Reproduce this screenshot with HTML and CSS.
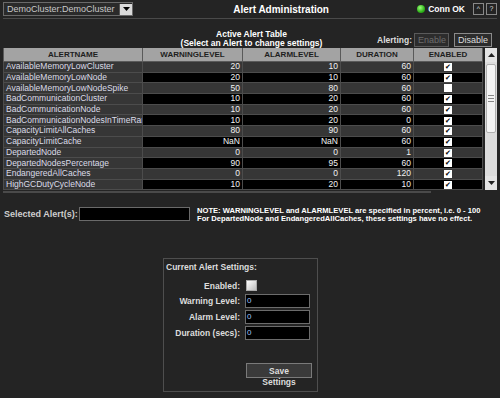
FILE: index.html
```html
<!DOCTYPE html>
<html>
<head>
    <title>Alert Administration</title>
    <link rel="stylesheet" href="styles.css">
</head>
<body>
    <div class="top-bar">
        <div class="cluster-select">
            <span class="cluster-name">DemoCluster:DemoCluster</span>
            <span class="select-arrow"><svg width="7" height="4" viewBox="0 0 7 4"><path d="M0 0h7L3.5 4z" fill="#000"/></svg></span>
        </div>
        <div class="page-title">Alert Administration</div>
        <div class="conn-status">
            <span class="conn-dot"></span>
            <span class="conn-text">Conn OK</span>
            <span class="mini-button">^</span>
            <span class="mini-button">?</span>
        </div>
    </div>

    <div class="table-heading">
        <div></div>
        <div class="table-title">Active Alert Table<br>(Select an Alert to change settings)</div>
        <div class="alerting">
            <span class="alerting-label">Alerting:</span>
            <button class="alert-button disabled">Enable</button>
            <button class="alert-button">Disable</button>
        </div>
    </div>

    <div class="table-wrap">
        <table class="alert-table">
            <colgroup>
                <col style="width:139px">
                <col style="width:100px">
                <col style="width:98px">
                <col style="width:73px">
                <col style="width:69px">
            </colgroup>
            <thead>
                <tr><th>ALERTNAME</th><th>WARNINGLEVEL</th><th>ALARMLEVEL</th><th>DURATION</th><th>ENABLED</th></tr>
            </thead>
            <tbody id="alert-rows"></tbody>
        </table>
        <div class="v-scroll">
            <div class="scroll-btn"><svg width="7" height="4" viewBox="0 0 7 4"><path d="M3.5 0L7 4H0z" fill="#222"/></svg></div>
            <div class="scroll-track">
                <div class="scroll-thumb"><span class="grip"></span></div>
            </div>
            <div class="scroll-btn"><svg width="7" height="4" viewBox="0 0 7 4"><path d="M0 0h7L3.5 4z" fill="#222"/></svg></div>
        </div>
    </div>
    <div class="h-scroll"></div>

    <div class="selected-row">
        <span class="selected-label">Selected Alert(s):</span>
        <span class="selected-input"></span>
        <div class="note">NOTE: WARNINGLEVEL and ALARMLEVEL are specified in percent, i.e. 0 - 100<br>For DepartedNode and EndangeredAllCaches, these settings have no effect.</div>
    </div>

    <div class="settings-panel">
        <div class="settings-title">Current Alert Settings:</div>
        <div class="settings-grid">
            <label>Enabled:</label><span class="enabled-box"></span>
            <label>Warning Level:</label><span class="field">0</span>
            <label>Alarm Level:</label><span class="field">0</span>
            <label>Duration (secs):</label><span class="field">0</span>
        </div>
        <div class="save-row">
            <button class="save-button">Save<br>Settings</button>
        </div>
    </div>

    <script>
        // alert definitions: name, warning, alarm, duration, enabled
        const alerts = [
            ['AvailableMemoryLowCluster', '20', '10', '60', true],
            ['AvailableMemoryLowNode', '20', '10', '60', true],
            ['AvailableMemoryLowNodeSpike', '50', '80', '60', false],
            ['BadCommunicationCluster', '10', '20', '60', true],
            ['BadCommunicationNode', '10', '20', '60', true],
            ['BadCommunicationNodesInTimeRange', '10', '20', '0', true],
            ['CapacityLimitAllCaches', '80', '90', '60', true],
            ['CapacityLimitCache', 'NaN', 'NaN', '60', true],
            ['DepartedNode', '0', '0', '1', true],
            ['DepartedNodesPercentage', '90', '95', '60', true],
            ['EndangeredAllCaches', '0', '0', '120', true],
            ['HighGCDutyCycleNode', '10', '20', '10', true]
        ];

        const rows = document.getElementById('alert-rows');
        alerts.forEach((a, i) => {
            const check = a[4] ? '<span class="check">&#10004;</span>' : '<span class="check"></span>';
            rows.innerHTML += `
                <tr class="${i % 2 ? 'even' : 'odd'}">
                    <td class="name">${a[0]}</td>
                    <td class="num">${a[1]}</td>
                    <td class="num">${a[2]}</td>
                    <td class="num">${a[3]}</td>
                    <td class="flag">${check}</td>
                </tr>`;
        });
    </script>
</body>
</html>
```

FILE: styles.css
```css
body {
    font-family: "Liberation Sans", Arial, sans-serif;
    background-color: #242424;
    color: #fff;
    margin: 0;
    padding: 0 3px;
    height: 398px;
    overflow: hidden;
}

.top-bar {
    display: flex;
    align-items: center;
    height: 16px;
    padding-top: 2px;
    border-bottom: 1px solid #4a4a4a;
}

.cluster-select {
    display: flex;
    align-items: center;
    width: 128px;
    height: 12px;
    border: 1px solid #6a6a6a;
    background-color: #2a2a2a;
    margin-bottom: 2px;
}

.cluster-name {
    flex: 1;
    color: #c8c8c8;
    font-size: 9px;
    padding-left: 3px;
    white-space: nowrap;
}

.select-arrow {
    width: 12px;
    height: 11px;
    margin-right: 0;
    border-left: 1px solid #555;
    background-color: #dadada;
    display: flex;
    align-items: center;
    justify-content: center;
}

.page-title {
    flex: 1;
    text-align: center;
    font-size: 10px;
    font-weight: bold;
    margin-bottom: 2px;
    padding-left: 12px;
}

.conn-status {
    display: flex;
    align-items: center;
    margin-bottom: 3px;
}

.conn-dot {
    width: 8px;
    height: 8px;
    border-radius: 50%;
    background: radial-gradient(circle at 40% 35%, #9cff7a, #2fb31a 60%, #1a7a10);
    margin-right: 3px;
}

.conn-text {
    font-size: 8.5px;
    font-weight: bold;
    margin-right: 6px;
}

.mini-button {
    width: 9px;
    height: 10px;
    border: 1px solid #888;
    font-size: 7px;
    color: #ddd;
    text-align: center;
    line-height: 10px;
    margin-left: 2px;
}

.table-heading {
    display: grid;
    grid-template-columns: 1fr auto 1fr;
    align-items: end;
    margin-top: 10px;
    height: 19px;
}

.table-title {
    text-align: center;
    font-size: 8.5px;
    font-weight: bold;
    line-height: 9px;
    padding-left: 3px;
}

.alerting {
    display: flex;
    justify-content: flex-end;
    align-items: center;
    padding-right: 5px;
    margin-bottom: 1px;
}

.alerting-label {
    font-size: 8.5px;
    font-weight: bold;
    color: #ddd;
}

.alert-button {
    font-family: "Liberation Sans", Arial, sans-serif;
    font-size: 9px;
    height: 14px;
    padding: 0 3px;
    margin-left: 2px;
    background-color: #2c2c2c;
    border: 1px solid #8a8a8a;
    color: #ddd;
}

.alert-button.disabled {
    width: 35px;
    color: #6c6c6c;
    border-color: #5a5a5a;
    margin-right: 3px;
}

.table-wrap {
    display: flex;
}

.alert-table {
    border-collapse: collapse;
    table-layout: fixed;
    width: 479px;
    font-size: 8.5px;
}

.alert-table th {
    background-color: #a3a3a3;
    color: #1e1e1e;
    font-size: 8px;
    height: 13px;
    padding: 0;
    border: 1px solid #5a5a5a;
    border-top: none;
}

.alert-table td {
    height: 9.7px;
    padding: 0 2px;
    border: 1px solid #4c4c4c;
    line-height: 9px;
    white-space: nowrap;
    overflow: hidden;
}

.alert-table tr.odd td {
    background-color: #363636;
}

.alert-table tr.even td {
    background-color: #000;
}

.alert-table tr td.name {
    background-color: #363636;
    color: #dcdce8;
    text-overflow: clip;
}

.alert-table td.num {
    text-align: right;
    color: #f2f2f2;
}

.alert-table td.flag {
    text-align: center;
}

.check {
    display: inline-block;
    width: 8px;
    height: 8px;
    background-color: #fff;
    color: #000;
    font-size: 7px;
    line-height: 8px;
    text-align: center;
    vertical-align: middle;
}

.v-scroll {
    width: 15px;
    margin-left: 2px;
    background-color: #dcdcdc;
    display: flex;
    flex-direction: column;
}

.scroll-btn {
    height: 14px;
    display: flex;
    align-items: center;
    justify-content: center;
    background-color: #e4e4e4;
}

.scroll-track {
    flex: 1;
    padding-top: 2px;
}

.scroll-thumb {
    height: 67px;
    margin: 0 1px;
    background-color: #f4f4f4;
    border: 1px solid #b0b0b0;
    border-radius: 2px;
    display: flex;
    align-items: center;
    justify-content: center;
}

.grip {
    width: 6px;
    height: 5px;
    border-top: 1px solid #888;
    border-bottom: 1px solid #888;
    background: linear-gradient(#888, #888) center / 6px 1px no-repeat;
}

.h-scroll {
    width: 428px;
    height: 2px;
    margin-top: 1px;
    background-color: #4a4a4a;
}

.selected-row {
    display: flex;
    align-items: center;
    margin-top: 12px;
}

.selected-label {
    font-size: 9px;
    font-weight: bold;
    color: #cfcfcf;
    padding-left: 1px;
    width: 75px;
}

.selected-input {
    width: 109px;
    height: 12px;
    background-color: #000;
    border: 1px solid #6a6a6a;
}

.note {
    margin-left: 7px;
    font-size: 7.6px;
    font-weight: bold;
    line-height: 8px;
    padding-top: 2px;
}

.settings-panel {
    width: 153px;
    height: 132px;
    margin: 35px 0 0 160px;
    border: 1px solid #4e4e4e;
}

.settings-title {
    font-size: 8.5px;
    font-weight: bold;
    color: #ddd;
    margin: 3px 0 0 2px;
}

.settings-grid {
    display: grid;
    grid-template-columns: 76px 65px;
    column-gap: 5px;
    row-gap: 2px;
    align-items: center;
    margin-top: 7px;
}

.settings-grid label {
    text-align: right;
    font-size: 8.5px;
    font-weight: bold;
    color: #ddd;
}

.enabled-box {
    width: 9px;
    height: 9px;
    border: 1px solid #aaa;
    background: linear-gradient(135deg, #fff, #bdbdbd);
    margin: 1px 0 1px 1px;
}

.field {
    height: 12px;
    background-color: #000;
    border: 1px solid #6c6c6c;
    color: #9fc4ff;
    font-size: 8px;
    line-height: 12px;
    padding-left: 1px;
}

.save-row {
    padding-left: 82px;
    margin-top: 23px;
}

.save-button {
    width: 66px;
    height: 15px;
    padding: 2px 0 0;
    background-color: #3a3a3a;
    border: 1px solid #7a7a7a;
    color: #ddd;
    font-family: "Liberation Sans", Arial, sans-serif;
    font-size: 8.5px;
    font-weight: bold;
    line-height: 11px;
    display: flex;
    flex-direction: column;
    align-items: center;
    justify-content: flex-start;
}
```
